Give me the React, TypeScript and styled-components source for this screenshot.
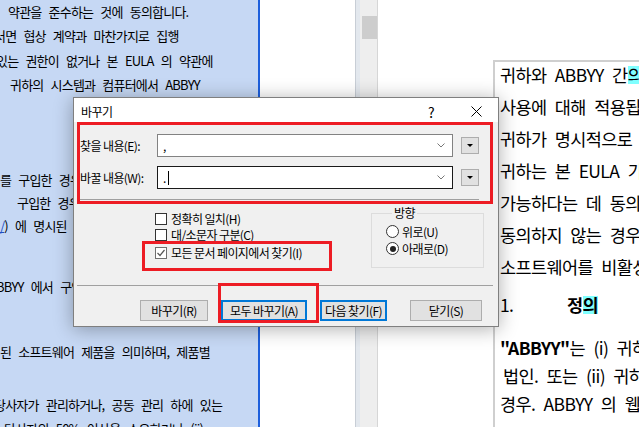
import React from 'react';
import styled, { createGlobalStyle } from 'styled-components';

const KR = `'Noto Sans CJK KR', 'Noto Sans', sans-serif`;

const GlobalStyle = createGlobalStyle`
  html, body {
    margin: 0;
    padding: 0;
    background: #fff;
  }
  body {
    font-family: ${KR};
    color: #000;
  }
`;

const Screen = styled.div`
  position: relative;
  width: 639px;
  height: 427px;
  overflow: hidden;
  display: flex;
  background: #fff;
`;

/* ---------- left document pane (selected text) ---------- */

const SelectionPane = styled.div`
  flex: 0 0 258px;
  background: #c6d8f4;
  border-right: 2px solid #1d5fdc;
  overflow: hidden;
  font: 13px/24.5px ${KR};
  letter-spacing: -0.8px;
  word-spacing: 5px;
`;

const PaneLine = styled.div<{ $x: number; $gap?: number }>`
  white-space: nowrap;
  text-indent: ${p => p.$x}px;
  margin-top: ${p => p.$gap ?? 0}px;
`;

const Link = styled.span`
  color: #1d4fc4;
  text-decoration: underline;
`;

const Gutter = styled.div<{ $w: number }>`
  flex: 0 0 ${p => p.$w}px;
`;

const ScrollTrack = styled.div`
  flex: 0 0 23px;
  box-sizing: border-box;
  border-left: 1px solid #c8ced6;
  border-right: 1px solid #d6d6d6;
  background: linear-gradient(to right, #e3e8ee 0 4px, #eeeeee 4px);
  padding: 16px 0 0 6px;
`;

const Thumb = styled.div`
  width: 15px;
  height: 23px;
  background: #cdcdcd;
`;

/* ---------- right document page ---------- */

const Page = styled.div`
  flex: 1;
  margin-top: 60px;
  border-top: 2px solid #cfcfcf;
  border-left: 2px solid #cfcfcf;
  padding-left: 5px;
  overflow: hidden;
  font: 17.5px/32px ${KR};
  letter-spacing: -0.6px;
  word-spacing: 5px;
`;

const PageBlock = styled.div<{ $gap: number; $lh: number }>`
  margin-top: ${p => p.$gap}px;
  line-height: ${p => p.$lh}px;
`;

const PageLine = styled.div<{ $x?: number }>`
  white-space: nowrap;
  padding-left: ${p => p.$x ?? 0}px;
`;

const Mark = styled.span`
  display: inline-block;
  line-height: 18px;
  background: #80ffff;
`;

const Heading = styled.div`
  display: flex;
  white-space: nowrap;
`;

const HeadingNum = styled.span`
  flex: 0 0 67px;
`;

const Bold = styled.span`
  font-weight: 700;
`;

/* ---------- replace dialog ---------- */

const Dialog = styled.div`
  position: absolute;
  left: 73px;
  top: 97px;
  width: 426px;
  height: 230px;
  box-sizing: border-box;
  border: 1px solid #7f7f7f;
  background: #f0f0f0;
  box-shadow: 0 2px 18px rgba(0, 0, 0, 0.32);
  font: 12px/16px ${KR};
  letter-spacing: -0.6px;
`;

const TitleBar = styled.div`
  height: 24px;
  box-sizing: border-box;
  padding: 3px 16px 0 7px;
  display: flex;
  align-items: center;
  background: #fff;
`;

const Title = styled.span`
  flex: 1;
`;

const Help = styled.span`
  font-size: 14px;
  width: 8px;
  text-align: center;
  margin-right: 36px;
`;

const Body = styled.div`
  padding: 0 5px 0 3px;
`;

const FindBox = styled.div`
  height: 82px;
  box-sizing: border-box;
  border: 3px solid #ed1c24;
  padding: 9px 11px 0 0;
`;

const FieldRow = styled.div<{ $gap?: number }>`
  display: flex;
  align-items: center;
  height: 23px;
  margin-top: ${p => p.$gap ?? 0}px;
`;

const FieldLabel = styled.span`
  flex: 0 0 77px;
`;

const Combo = styled.div<{ $focused?: boolean }>`
  flex: 0 0 296px;
  height: 23px;
  box-sizing: border-box;
  border: 1px solid ${p => (p.$focused ? '#1a1a1a' : '#828282')};
  background: #fff;
  display: flex;
  align-items: center;
  padding: 0 7px 0 5px;
`;

const ComboValue = styled.span`
  flex: 1;
  display: flex;
  align-items: center;
  font-size: 12px;
`;

const Caret = styled.span`
  display: inline-block;
  width: 1px;
  height: 14px;
  background: #000;
  margin-left: 2px;
`;

const DropButton = styled.div`
  flex: 0 0 18px;
  height: 17px;
  margin-left: 8px;
  box-sizing: border-box;
  border: 1px solid #adadad;
  background: #e1e1e1;
  display: flex;
  align-items: center;
  justify-content: center;

  &::after {
    content: '';
    border-left: 3px solid transparent;
    border-right: 3px solid transparent;
    border-top: 3px solid #000;
  }
`;

const Rule = styled.div<{ $gap?: number }>`
  height: 1px;
  background: #a0a0a0;
  margin-top: ${p => p.$gap ?? 0}px;
`;

const Options = styled.div`
  height: 81px;
  display: flex;
`;

const CheckColumn = styled.div`
  flex: 1;
  padding: 7px 0 0 78px;
`;

const CheckRow = styled.div<{ $gap?: number }>`
  display: flex;
  align-items: center;
  height: 16px;
  margin-top: ${p => p.$gap ?? 0}px;
  white-space: nowrap;
`;

const CheckBox = styled.span<{ $checked?: boolean }>`
  flex: 0 0 12px;
  height: 12px;
  box-sizing: border-box;
  border: 1px solid ${p => (p.$checked ? '#6f6f6f' : '#333')};
  background: #fff;
  margin-right: 4px;
  display: flex;
`;

const Group = styled.fieldset`
  width: 113px;
  height: 63px;
  box-sizing: border-box;
  margin: 1px 9px 0 0;
  padding: 2px 0 0 14px;
  border: 1px solid #dcdcdc;
  min-inline-size: 0;
`;

const Legend = styled.legend`
  padding: 0 2px;
  margin-left: 6px;
  font-size: 12px;
  line-height: 16px;
`;

const RadioRow = styled.div`
  display: flex;
  align-items: center;
  height: 17px;
`;

const Radio = styled.span<{ $checked?: boolean }>`
  flex: 0 0 13px;
  height: 13px;
  box-sizing: border-box;
  border: 1px solid #333;
  border-radius: 50%;
  background: #fff;
  margin-right: 3px;
  display: flex;
  align-items: center;
  justify-content: center;

  &::after {
    content: '';
    width: 6px;
    height: 6px;
    border-radius: 50%;
    background: ${p => (p.$checked ? '#222' : 'transparent')};
  }
`;

const ButtonRow = styled.div`
  display: flex;
  gap: 13px;
  padding: 14px 0 0 63px;
`;

const Button = styled.button<{ $w: number; $focus?: boolean; $push?: number }>`
  width: ${p => p.$w}px;
  height: 21px;
  margin-left: ${p => p.$push ?? 0}px;
  padding: 0;
  box-sizing: border-box;
  border: ${p => (p.$focus ? '2px solid #0078d7' : '1px solid #adadad')};
  background: #e1e1e1;
  font: 12px/16px ${KR};
  letter-spacing: -0.6px;
  color: #000;
`;

const Callout = styled.div<{ $l: number; $t: number; $w: number; $h: number }>`
  position: absolute;
  left: ${p => p.$l}px;
  top: ${p => p.$t}px;
  width: ${p => p.$w}px;
  height: ${p => p.$h}px;
  box-sizing: border-box;
  border: 3px solid #ed1c24;
  pointer-events: none;
`;

const CloseIcon = () => (
  <svg width="11" height="11" viewBox="0 0 11 11">
    <path d="M0.5 0.5 L10.5 10.5 M10.5 0.5 L0.5 10.5" stroke="#000" strokeWidth="1" />
  </svg>
);

const Chevron = () => (
  <svg width="8" height="5" viewBox="0 0 8 5">
    <polyline points="0.5,0.5 4,4 7.5,0.5" fill="none" stroke="#777" strokeWidth="1" />
  </svg>
);

const Tick = () => (
  <svg width="10" height="10" viewBox="0 0 10 10">
    <polyline points="1.5,5 4,7.5 8.5,2" fill="none" stroke="#555" strokeWidth="1.2" />
  </svg>
);

const paneLines: { x: number; gap?: number; text: React.ReactNode }[] = [
  { x: 8, gap: -0.5, text: '약관을 준수하는 것에 동의합니다.' },
  { x: -6, text: '서면 협상 계약과 마찬가지로 집행' },
  { x: -4, text: '있는 권한이 없거나 본 EULA 의 약관에' },
  { x: 10, text: '귀하의 시스템과 컴퓨터에서 ABBYY' },
  { x: 0, gap: 70, text: '를 구입한 경우, 본 EULA 의 약관이' },
  { x: 17, gap: -1.5, text: '구입한 경우 해당 판매자의 약관이' },
  { x: 0, gap: -1.5, text: <><Link>/</Link>) 에 명시된 약관이 적용됩니다</> },
  { x: -11, gap: 36.5, text: 'ABBYY 에서 구입한 경우' },
  { x: 0, gap: 40.5, text: '된 소프트웨어 제품을 의미하며, 제품별' },
  { x: -6, gap: 28.5, text: '당사자가 관리하거나, 공동 관리 하에 있는' },
  { x: 4, text: '당사자의 50% 이상을 소유하거나 (ii)' },
];

export default function App() {
  return (
    <>
      <GlobalStyle />
      <Screen>
        <SelectionPane>
          {paneLines.map((l, i) => (
            <PaneLine key={i} $x={l.x} $gap={l.gap}>
              {l.text}
            </PaneLine>
          ))}
        </SelectionPane>
        <Gutter $w={95} />
        <ScrollTrack>
          <Thumb />
        </ScrollTrack>
        <Gutter $w={115} />
        <Page>
          <PageBlock $gap={-3} $lh={32}>
            <PageLine>귀하와 ABBYY 간<Mark>의</Mark> 법적 계약입니다.</PageLine>
            <PageLine>사용에 대해 적용됩니다.</PageLine>
            <PageLine>귀하가 명시적으로 동의하는</PageLine>
            <PageLine>귀하는 본 EULA 가 서면</PageLine>
            <PageLine>가능하다는 데 동의합니다.</PageLine>
            <PageLine>동의하지 않는 경우 귀하는</PageLine>
            <PageLine>소프트웨어를 비활성화하고</PageLine>
          </PageBlock>
          <PageBlock $gap={6} $lh={32}>
            <Heading>
              <HeadingNum>1.</HeadingNum>
              <Bold>
                정<Mark>의</Mark>
              </Bold>
            </Heading>
          </PageBlock>
          <PageBlock $gap={13} $lh={28}>
            <PageLine>
              <Bold>"ABBYY"</Bold>는 (i) 귀하가 거주하는
            </PageLine>
            <PageLine $x={3}>법인. 또는 (ii) 귀하가 거주하는</PageLine>
            <PageLine>경우. ABBYY 의 웹사이트</PageLine>
          </PageBlock>
        </Page>

        <Dialog>
          <TitleBar>
            <Title>바꾸기</Title>
            <Help>?</Help>
            <CloseIcon />
          </TitleBar>
          <Body>
            <FindBox>
              <FieldRow>
                <FieldLabel>찾을 내용(E):</FieldLabel>
                <Combo>
                  <ComboValue>,</ComboValue>
                  <Chevron />
                </Combo>
                <DropButton />
              </FieldRow>
              <FieldRow $gap={9}>
                <FieldLabel>바꿀 내용(W):</FieldLabel>
                <Combo $focused>
                  <ComboValue>
                    .<Caret />
                  </ComboValue>
                  <Chevron />
                </Combo>
                <DropButton />
              </FieldRow>
              <Rule $gap={10} />
            </FindBox>
            <Options>
              <CheckColumn>
                <CheckRow>
                  <CheckBox />
                  정확히 일치(H)
                </CheckRow>
                <CheckRow>
                  <CheckBox />
                  대/소문자 구분(C)
                </CheckRow>
                <CheckRow $gap={2}>
                  <CheckBox $checked>
                    <Tick />
                  </CheckBox>
                  모든 문서 페이지에서 찾기(I)
                </CheckRow>
              </CheckColumn>
              <Group>
                <Legend>방향</Legend>
                <RadioRow>
                  <Radio />
                  위로(U)
                </RadioRow>
                <RadioRow>
                  <Radio $checked />
                  아래로(D)
                </RadioRow>
              </Group>
            </Options>
            <Rule />
            <ButtonRow>
              <Button $w={68}>바꾸기(R)</Button>
              <Button $w={86} $focus>
                모두 바꾸기(A)
              </Button>
              <Button $w={67} $focus>
                다음 찾기(F)
              </Button>
              <Button $w={72} $push={10}>
                닫기(S)
              </Button>
            </ButtonRow>
          </Body>
          <Callout $l={68} $t={143} $w={190} $h={30} />
          <Callout $l={144} $t={185} $w={101} $h={40} />
        </Dialog>
      </Screen>
    </>
  );
}
